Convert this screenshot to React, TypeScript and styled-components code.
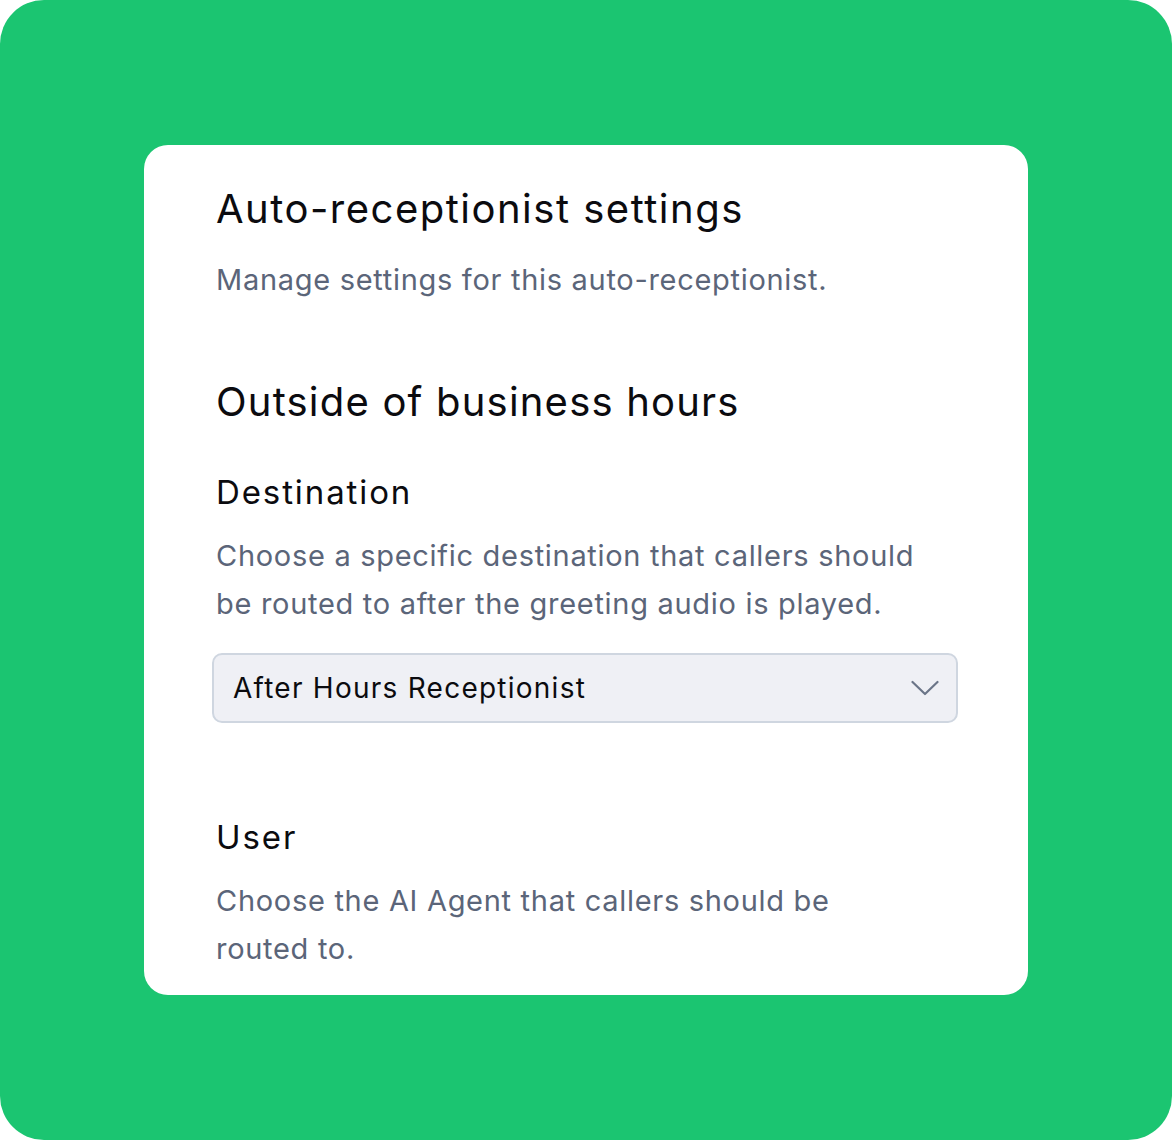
import React from 'react';
import styled, { createGlobalStyle } from 'styled-components';

const GlobalStyle = createGlobalStyle`
  html, body {
    margin: 0;
    padding: 0;
    background: #ffffff;
  }
  body {
    font-family: Inter, "Noto Sans", "Liberation Sans", sans-serif;
    -webkit-font-smoothing: antialiased;
  }
`;

const Frame = styled.div`
  width: 1172px;
  height: 1140px;
  box-sizing: border-box;
  background: #1bc571;
  border-radius: 44px;
  padding: 145px 144px 0 144px;
`;

const Card = styled.section`
  width: 884px;
  height: 850px;
  box-sizing: border-box;
  background: #ffffff;
  border-radius: 24px;
  padding: 40px 72px 0 72px;
  overflow: hidden;
  display: flex;
  flex-direction: column;
`;

const Heading = styled.h1<{ $top: number; $spacing: number }>`
  margin: ${(p) => p.$top}px 0 0 0;
  font-size: 40px;
  line-height: 48px;
  font-weight: 400;
  color: #0b0b0f;
  letter-spacing: ${(p) => p.$spacing}px;
`;

const Muted = styled.p<{ $top: number }>`
  margin: ${(p) => p.$top}px 0 0 0;
  font-size: 29px;
  line-height: 48px;
  font-weight: 400;
  color: #5b6579;
  letter-spacing: 0.7px;
  max-width: 702px;
`;

const FieldLabel = styled.h3<{ $top: number }>`
  margin: ${(p) => p.$top}px 0 0 0;
  font-size: 33px;
  line-height: 40px;
  font-weight: 400;
  color: #0b0b0f;
  letter-spacing: 1.9px;
`;

const Select = styled.div`
  margin: 25px 0 0 -4px;
  width: 746px;
  height: 70px;
  box-sizing: border-box;
  background: #eff0f5;
  border: 2px solid #cfd6e0;
  border-radius: 10px;
  display: flex;
  align-items: center;
  justify-content: space-between;
  padding: 0 17px 0 19px;
`;

const SelectValue = styled.span`
  font-size: 28px;
  font-weight: 400;
  color: #0b0b0f;
  letter-spacing: 1.25px;
`;

const Chevron = () => (
  <svg width="28" height="16" viewBox="0 0 28 16" fill="none">
    <polyline
      points="1.5,2 14,14 26.5,2"
      stroke="#6b7588"
      strokeWidth="2.2"
      strokeLinecap="round"
      strokeLinejoin="round"
    />
  </svg>
);

const App = () => {
  return (
    <>
      <GlobalStyle />
      <Frame>
        <Card>
          <Heading $top={0} $spacing={1.5}>Auto-receptionist settings</Heading>
          <Muted $top={23}>Manage settings for this auto-receptionist.</Muted>
          <Heading as="h2" $top={74} $spacing={1.2}>Outside of business hours</Heading>
          <FieldLabel $top={46}>Destination</FieldLabel>
          <Muted $top={20}>
            Choose a specific destination that callers should be routed to after the greeting audio is played.
          </Muted>
          <Select>
            <SelectValue>After Hours Receptionist</SelectValue>
            <Chevron />
          </Select>
          <FieldLabel $top={94}>User</FieldLabel>
          <Muted $top={20}>Choose the AI Agent that callers should be routed to.</Muted>
        </Card>
      </Frame>
    </>
  );
};

export default App;
